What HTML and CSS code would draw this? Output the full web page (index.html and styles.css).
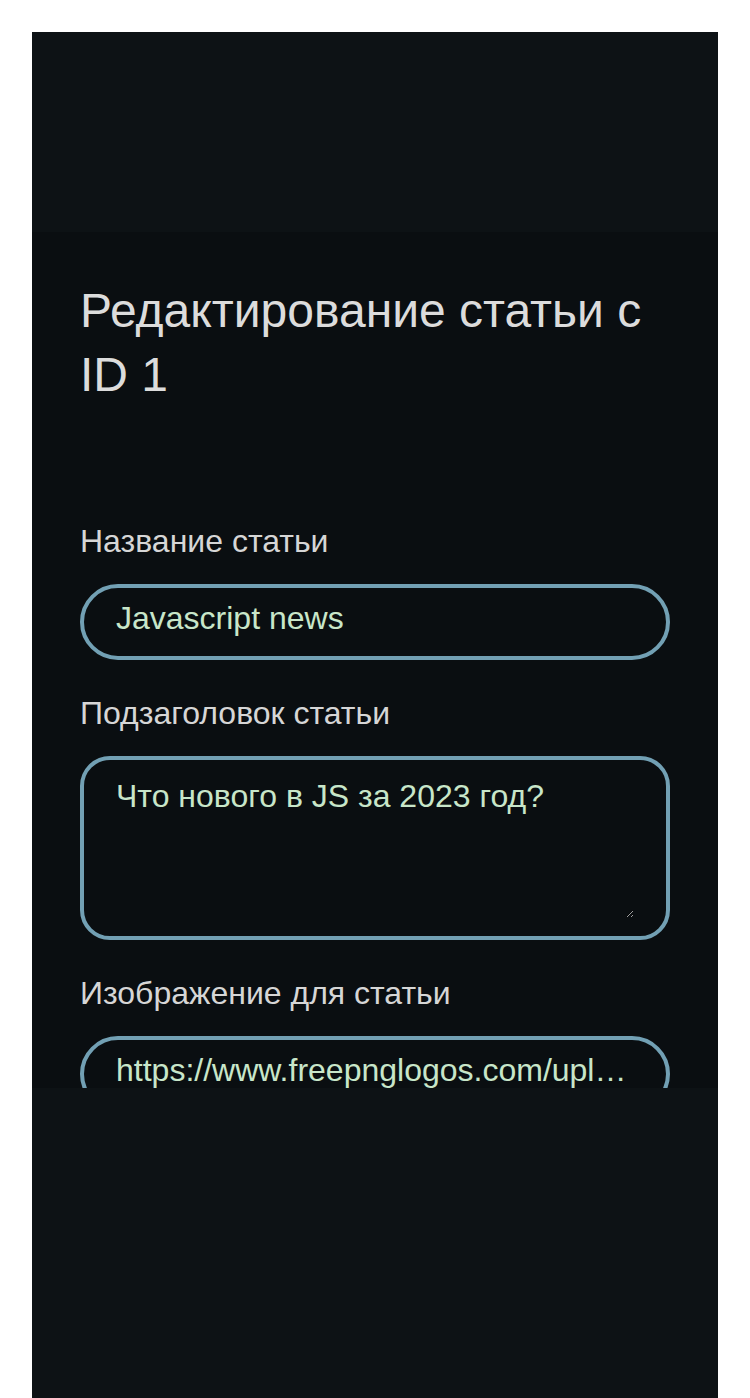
FILE: index.html
```html
<!DOCTYPE html>
<html lang="ru">
<head>
<meta charset="utf-8">
<title>Редактирование статьи</title>
<link rel="stylesheet" href="styles.css">
</head>
<body>
<div class="app">
  <header class="top"></header>
  <main class="content">
    <h1 class="title">Редактирование статьи с ID 1</h1>
    <form class="form">
      <label class="field">
        <span class="label">Название статьи</span>
        <input class="input" type="text" value="Javascript news">
      </label>
      <label class="field">
        <span class="label">Подзаголовок статьи</span>
        <span class="textarea-box"><textarea class="textarea">Что нового в JS за 2023 год?</textarea></span>
      </label>
      <label class="field">
        <span class="label">Изображение для статьи</span>
        <input class="input" type="text" value="https://www.freepnglogos.com/uploads/javascript-png/javascript-logo-transparent-logo-javascript-images-3.png">
      </label>
    </form>
  </main>
  <footer class="bottom"></footer>
</div>
</body>
</html>
```
FILE: styles.css
```css
html, body {
  margin: 0;
  padding: 0;
  background: #ffffff;
}
body {
  padding: 32px 32px 0;
  font-family: "Liberation Sans", Arial, sans-serif;
}
.app {
  background: #0d1215;
  display: flex;
  flex-direction: column;
}
.top {
  height: 200px;
}
.content {
  height: 856px;
  overflow: hidden;
  background: #0a0e11;
  padding: 47px 48px 0;
  box-sizing: border-box;
}
.bottom {
  height: 310px;
}
.title {
  margin: 0 0 116px;
  font-size: 48px;
  line-height: 64px;
  font-weight: 400;
  color: #dcdcdc;
}
.form {
  display: flex;
  flex-direction: column;
  gap: 35px;
}
.field {
  display: flex;
  flex-direction: column;
  gap: 25px;
}
.label {
  font-size: 32px;
  line-height: 36px;
  color: #d6d6d6;
}
.input, .textarea-box {
  box-sizing: border-box;
  width: 590px;
  margin: 0;
  background: #0a0e11;
  border: 4px solid #72a0b4;
}
.input, .textarea {
  color: #c8e6c9;
  font-family: "Liberation Sans", Arial, sans-serif;
  font-size: 32px;
  outline: none;
}
.input {
  height: 76px;
  border-radius: 999px;
  padding: 12px 32px 19px;
  text-overflow: ellipsis;
}
.textarea-box {
  display: flex;
  height: 184px;
  border-radius: 30px;
  padding: 18px 32px;
}
.textarea {
  flex: 1;
  margin: 0;
  padding: 0;
  border: none;
  background: transparent;
  line-height: normal;
  resize: vertical;
  color-scheme: dark;
}
```
